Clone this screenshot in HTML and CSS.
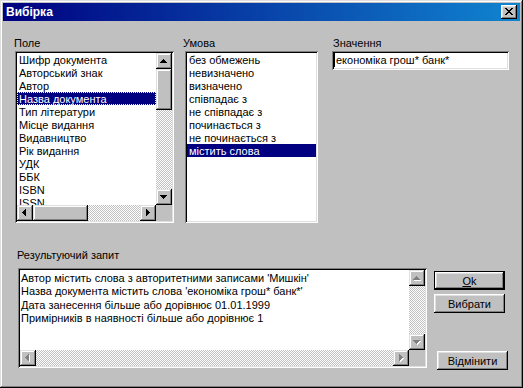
FILE: index.html
```html
<!doctype html>
<html>
<head>
<meta charset="utf-8">
<link rel="stylesheet" href="styles.css">
</head>
<body>
<div class="win">
  <div class="title">
    <span class="title-text">Вибірка</span>
    <span class="close-btn"><svg width="16" height="14" viewBox="0 0 16 14"><path fill="#000" d="M4 3h2v1H4zM10 3h2v1h-2zM5 4h2v1H5zM9 4h2v1H9zM6 5h4v1H6zM7 6h2v1H7zM6 7h4v1H6zM5 8h2v1H5zM9 8h2v1H9zM4 9h2v1H4zM10 9h2v1h-2z"/></svg></span>
  </div>

  <div class="body">
    <div class="top-row">
      <!-- Поле -->
      <div class="col col-field">
        <div class="lbl lbl-field">Поле</div>
        <div class="sunken listbox list-field">
          <div class="items">
            <div class="item">Шифр документа</div>
            <div class="item">Авторський знак</div>
            <div class="item">Автор</div>
            <div class="item sel focus">Назва документа</div>
            <div class="item">Тип літератури</div>
            <div class="item">Місце видання</div>
            <div class="item">Видавництво</div>
            <div class="item">Рік видання</div>
            <div class="item">УДК</div>
            <div class="item">ББК</div>
            <div class="item">ISBN</div>
            <div class="item">ISSN</div>
          </div>
          <div class="vscroll">
            <span class="sb-btn"><svg width="16" height="16" viewBox="0 0 16 16"><path fill="#000" d="M7 6h1v1H7zM6 7h3v1H6zM5 8h5v1H5zM4 9h7v1H4z"/></svg></span>
            <span class="sb-thumb thumb-v"></span>
            <span class="sb-track"></span>
            <span class="sb-btn"><svg width="16" height="16" viewBox="0 0 16 16"><path fill="#000" d="M4 6h7v1H4zM5 7h5v1H5zM6 8h3v1H6zM7 9h1v1H7z"/></svg></span>
          </div>
          <div class="hscroll">
            <span class="sb-btn"><svg width="16" height="16" viewBox="0 0 16 16"><path fill="#000" d="M5 7h1v1H5zM6 6h1v3H6zM7 5h1v5H7zM8 4h1v7H8z"/></svg></span>
            <span class="sb-thumb thumb-h"></span>
            <span class="sb-track"></span>
            <span class="sb-btn"><svg width="16" height="16" viewBox="0 0 16 16"><path fill="#000" d="M6 4h1v7H6zM7 5h1v5H7zM8 6h1v3H8zM9 7h1v1H9z"/></svg></span>
          </div>
          <div class="corner"></div>
        </div>
      </div>

      <!-- Умова -->
      <div class="col col-cond">
        <div class="lbl lbl-cond">Умова</div>
        <div class="sunken listbox list-cond">
          <div class="items">
            <div class="item">без обмежень</div>
            <div class="item">невизначено</div>
            <div class="item">визначено</div>
            <div class="item">співпадає з</div>
            <div class="item">не співпадає з</div>
            <div class="item">починається з</div>
            <div class="item">не починається з</div>
            <div class="item sel">містить слова</div>
          </div>
        </div>
      </div>

      <!-- Значення -->
      <div class="col col-value">
        <div class="lbl lbl-value">Значення</div>
        <div class="sunken field"><span class="caret"></span>економіка грош* банк*</div>
      </div>
    </div>

    <div class="lbl lbl-result">Результуючий запит</div>
    <div class="bottom-row">
      <div class="sunken memo">
        <div class="memo-text">
          <div>Автор містить слова з авторитетними записами 'Мишкін'</div>
          <div>Назва документа містить слова 'економіка грош* банк*'</div>
          <div>Дата занесення більше або дорівнює 01.01.1999</div>
          <div>Примірників в наявності більше або дорівнює 1</div>
        </div>
        <div class="vscroll">
          <span class="sb-btn"><svg width="16" height="16" viewBox="0 0 16 16"><path fill="#fff" d="M8 7h1v1H8zM7 8h3v1H7zM6 9h5v1H6zM5 10h7v1H5z"/><path fill="#808080" d="M7 6h1v1H7zM6 7h3v1H6zM5 8h5v1H5zM4 9h7v1H4z"/></svg></span>
          <span class="sb-track"></span>
          <span class="sb-btn"><svg width="16" height="16" viewBox="0 0 16 16"><path fill="#fff" d="M5 7h7v1H5zM6 8h5v1H6zM7 9h3v1H7zM8 10h1v1H8z"/><path fill="#808080" d="M4 6h7v1H4zM5 7h5v1H5zM6 8h3v1H6zM7 9h1v1H7z"/></svg></span>
        </div>
        <div class="hscroll">
          <span class="sb-btn"><svg width="16" height="16" viewBox="0 0 16 16"><path fill="#fff" d="M6 8h1v1H6zM7 7h1v3H7zM8 6h1v5H8zM9 5h1v7H9z"/><path fill="#808080" d="M5 7h1v1H5zM6 6h1v3H6zM7 5h1v5H7zM8 4h1v7H8z"/></svg></span>
          <span class="sb-track"></span>
          <span class="sb-btn"><svg width="16" height="16" viewBox="0 0 16 16"><path fill="#fff" d="M7 5h1v7H7zM8 6h1v5H8zM9 7h1v3H9zM10 8h1v1h-1z"/><path fill="#808080" d="M6 4h1v7H6zM7 5h1v5H7zM8 6h1v3H8zM9 7h1v1H9z"/></svg></span>
        </div>
        <div class="corner"></div>
      </div>

      <div class="buttons">
        <div class="btn btn-default"><span><u>O</u>k</span></div>
        <div class="btn">Вибрати</div>
        <div class="btn btn-cancel">Відмінити</div>
      </div>
    </div>
  </div>
</div>
</body>
</html>
```

FILE: styles.css
```css
body {
  margin: 0;
  background: #c0c0c0;
  font-family: "Liberation Sans", Arial, sans-serif;
  font-size: 11px;
  color: #000;
}

/* рамка вікна */
.win {
  width: 523px;
  height: 388px;
  box-sizing: border-box;
  padding: 3px;
  background: #c0c0c0;
  box-shadow: inset -1px -1px #000, inset 1px 1px #dfdfdf,
              inset -2px -2px #808080, inset 2px 2px #fff;
}

.title {
  height: 18px;
  display: flex;
  align-items: center;
  justify-content: space-between;
  padding: 0 3px 0 3px;
  background: linear-gradient(to right, #000080, #1084d0);
}
.title-text {
  color: #fff;
  font-weight: bold;
  font-size: 12px;
}
.close-btn {
  width: 16px;
  height: 14px;
  display: flex;
  background: #c0c0c0;
  box-shadow: inset -1px -1px #000, inset 1px 1px #fff,
              inset -2px -2px #808080, inset 2px 2px #dfdfdf;
}

.body {
  padding: 16px 0 0 12px;
}

.top-row {
  display: flex;
  align-items: flex-start;
}
.col-cond { margin-left: 11px; }
.col-value { margin-left: 14px; }

.lbl {
  line-height: 13px;
  height: 13px;
  margin-bottom: 1px;
  white-space: nowrap;
}
.lbl-field { margin-left: -1px; }
.lbl-cond { margin-left: -2px; }
.lbl-value { margin-left: 1px; }

/* втиснута рамка */
.sunken {
  box-sizing: border-box;
  padding: 2px;
  background: #fff;
  box-shadow: inset 1px 1px #808080, inset -1px -1px #fff,
              inset 2px 2px #000, inset -2px -2px #dfdfdf;
}

.listbox {
  height: 172px;
  display: grid;
  grid-template-columns: 1fr 16px;
  grid-template-rows: 1fr 16px;
}
.list-field { width: 159px; }
.list-cond {
  width: 133px;
  display: block;
}
.items {
  overflow: hidden;
  min-width: 0;
}
.item {
  height: 13px;
  box-sizing: border-box;
  padding: 1px 0 0 2px;
  line-height: 13px;
  white-space: nowrap;
}
.item.sel {
  background: #000080;
  color: #fff;
}
.item.focus {
  outline: 1px dotted #ffff80;
  outline-offset: -1px;
}

/* смуги прокрутки */
.vscroll {
  display: flex;
  flex-direction: column;
  background: #c0c0c0;
}
.hscroll {
  display: flex;
  background: #c0c0c0;
}
.corner { background: #c0c0c0; }
.sb-btn {
  width: 16px;
  height: 16px;
  flex: none;
  display: flex;
  background: #c0c0c0;
  box-shadow: inset -1px -1px #000, inset 1px 1px #dfdfdf,
              inset -2px -2px #808080, inset 2px 2px #fff;
}
.sb-thumb {
  flex: none;
  background: #c0c0c0;
  box-shadow: inset -1px -1px #000, inset 1px 1px #dfdfdf,
              inset -2px -2px #808080, inset 2px 2px #fff;
}
.thumb-v { height: 41px; }
.thumb-h { width: 55px; }
.sb-track {
  flex: 1;
  background: repeating-conic-gradient(#c0c0c0 0 25%, #fff 0 50%) 0 0 / 2px 2px;
}

/* поле значення */
.field {
  width: 177px;
  height: 19px;
  padding: 2px 2px 0 2px;
  line-height: 15px;
  white-space: nowrap;
}
.caret {
  display: inline-block;
  width: 1px;
  height: 14px;
  background: #000;
  vertical-align: top;
  margin-right: 1px;
}

.lbl-result {
  margin-top: 26px;
  margin-left: 2px;
  margin-bottom: 6px;
}

.bottom-row {
  display: flex;
  align-items: flex-start;
  margin-left: 3px;
}
.memo {
  width: 409px;
  height: 100px;
  display: grid;
  grid-template-columns: 1fr 16px;
  grid-template-rows: 1fr 16px;
}
.memo-text {
  padding: 2px 0 0 1px;
  line-height: 13.3px;
  white-space: nowrap;
  overflow: hidden;
}

.buttons {
  margin-left: 7px;
  padding-top: 3px;
  display: flex;
  flex-direction: column;
}
.btn {
  width: 71px;
  height: 19px;
  box-sizing: border-box;
  display: flex;
  align-items: center;
  justify-content: center;
  background: #c0c0c0;
  box-shadow: inset -1px -1px #000, inset 1px 1px #fff,
              inset -2px -2px #808080, inset 2px 2px #dfdfdf;
  margin-bottom: 4px;
}
.btn-default {
  border: 1px solid #000;
}
.btn-cancel {
  margin-top: 34px;
  margin-left: 3px;
}
```
